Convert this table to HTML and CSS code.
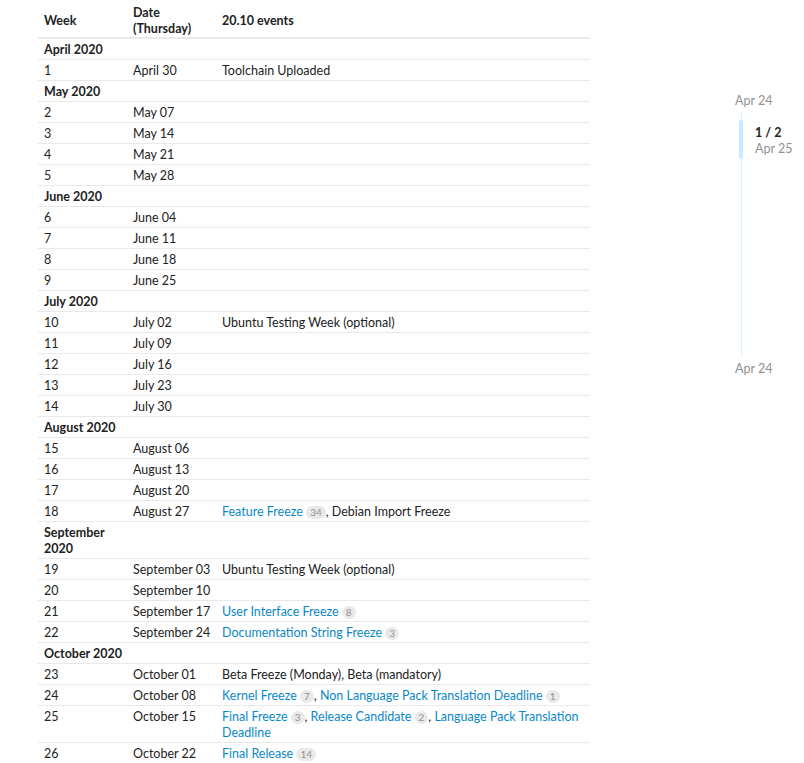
FILE: index.html
```html
<!DOCTYPE html>
<html>
<head>
<meta charset="utf-8">
<link rel="stylesheet" href="styles.css">
</head>
<body>
<div class="page">
  <table class="sched">
    <colgroup><col class="c1"><col class="c2"><col class="c3"></colgroup>
    <thead>
      <tr><th>Week</th><th>Date (Thursday)</th><th>20.10 events</th></tr>
    </thead>
    <tbody>
      <tr class="month"><td>April 2020</td><td></td><td></td></tr>
      <tr><td>1</td><td>April 30</td><td>Toolchain Uploaded</td></tr>
      <tr class="month"><td>May 2020</td><td></td><td></td></tr>
      <tr><td>2</td><td>May 07</td><td></td></tr>
      <tr><td>3</td><td>May 14</td><td></td></tr>
      <tr><td>4</td><td>May 21</td><td></td></tr>
      <tr><td>5</td><td>May 28</td><td></td></tr>
      <tr class="month"><td>June 2020</td><td></td><td></td></tr>
      <tr><td>6</td><td>June 04</td><td></td></tr>
      <tr><td>7</td><td>June 11</td><td></td></tr>
      <tr><td>8</td><td>June 18</td><td></td></tr>
      <tr><td>9</td><td>June 25</td><td></td></tr>
      <tr class="month"><td>July 2020</td><td></td><td></td></tr>
      <tr><td>10</td><td>July 02</td><td>Ubuntu Testing Week (optional)</td></tr>
      <tr><td>11</td><td>July 09</td><td></td></tr>
      <tr><td>12</td><td>July 16</td><td></td></tr>
      <tr><td>13</td><td>July 23</td><td></td></tr>
      <tr><td>14</td><td>July 30</td><td></td></tr>
      <tr class="month"><td>August 2020</td><td></td><td></td></tr>
      <tr><td>15</td><td>August 06</td><td></td></tr>
      <tr><td>16</td><td>August 13</td><td></td></tr>
      <tr><td>17</td><td>August 20</td><td></td></tr>
      <tr><td>18</td><td>August 27</td><td><a href="#">Feature Freeze</a> <span class="badge">34</span>, Debian Import Freeze</td></tr>
      <tr class="month"><td>September<br>2020</td><td></td><td></td></tr>
      <tr><td>19</td><td>September 03</td><td>Ubuntu Testing Week (optional)</td></tr>
      <tr><td>20</td><td>September 10</td><td></td></tr>
      <tr><td>21</td><td>September 17</td><td><a href="#">User Interface Freeze</a> <span class="badge">8</span></td></tr>
      <tr><td>22</td><td>September 24</td><td><a href="#">Documentation String Freeze</a> <span class="badge">3</span></td></tr>
      <tr class="month"><td>October 2020</td><td></td><td></td></tr>
      <tr><td>23</td><td>October 01</td><td>Beta Freeze (Monday), Beta (mandatory)</td></tr>
      <tr><td>24</td><td>October 08</td><td><a href="#">Kernel Freeze</a> <span class="badge">7</span>, <a href="#">Non Language Pack Translation Deadline</a> <span class="badge">1</span></td></tr>
      <tr><td>25</td><td>October 15</td><td><a href="#">Final Freeze</a> <span class="badge">3</span>, <a href="#">Release Candidate</a> <span class="badge">2</span>, <a href="#">Language Pack Translation Deadline</a></td></tr>
      <tr><td>26</td><td>October 22</td><td><a href="#">Final Release</a> <span class="badge">14</span></td></tr>
    </tbody>
  </table>
  <aside class="timeline">
    <div class="tl-date">Apr 24</div>
    <div class="tl-track">
      <div class="tl-line">
        <div class="tl-handle"></div>
      </div>
      <div class="tl-info">
        <div class="tl-count">1 / 2</div>
        <div class="tl-sub">Apr 25</div>
      </div>
    </div>
    <div class="tl-date">Apr 24</div>
  </aside>
</div>
</body>
</html>
```
FILE: styles.css
```css
html, body {
  margin: 0;
  padding: 0;
  background: #fff;
}
body {
  font-family: Lato, "Open Sans", sans-serif;
  font-size: 12.5px;
  color: #222;
}
.page {
  display: flex;
  align-items: flex-start;
  padding-left: 38px;
}
.sched {
  width: 552px;
  table-layout: fixed;
  border-collapse: collapse;
  flex: none;
}
.c1, .c2 { width: 89px; }
.c3 { width: 374px; }
.sched th, .sched td {
  text-align: left;
  vertical-align: top;
  padding: 3px 6px 1px;
  line-height: 16px;
}
.sched td:nth-child(2) { white-space: nowrap; }
.sched th {
  font-weight: 700;
  border-bottom: 2px solid #e9e9e9;
  vertical-align: middle;
  padding-top: 5px;
  padding-bottom: 0;
}
.sched td {
  border-bottom: 1px solid #e9e9e9;
}
.sched tr:last-child td { border-bottom: none; }
.month td:first-child {
  font-weight: 700;
  white-space: nowrap;
}
.sched a {
  color: #0a88c9;
  text-decoration: none;
}
.badge {
  display: inline-block;
  background: #e9e9e9;
  color: #919191;
  font-size: 10px;
  line-height: 13px;
  padding: 0 4px;
  border-radius: 7px;
  vertical-align: 0;
}
.timeline {
  margin-left: 145px;
  margin-top: 93px;
  width: 70px;
  flex: none;
  color: #919191;
  font-size: 12.5px;
}
.tl-date {
  line-height: 16px;
}
.tl-track {
  display: flex;
  height: 244px;
  margin: 4px 0;
}
.tl-line {
  margin-left: 6px;
  width: 1px;
  background: #d1f0ff;
  position: relative;
}
.tl-handle {
  position: absolute;
  left: -2px;
  top: 7px;
  width: 4px;
  height: 39px;
  border-radius: 2px;
  background: #c4ebff;
}
.tl-info {
  margin-left: 13px;
  margin-top: 12px;
}
.tl-count {
  font-weight: 700;
  color: #222;
  line-height: 16px;
}
.tl-sub {
  line-height: 16px;
}
```
